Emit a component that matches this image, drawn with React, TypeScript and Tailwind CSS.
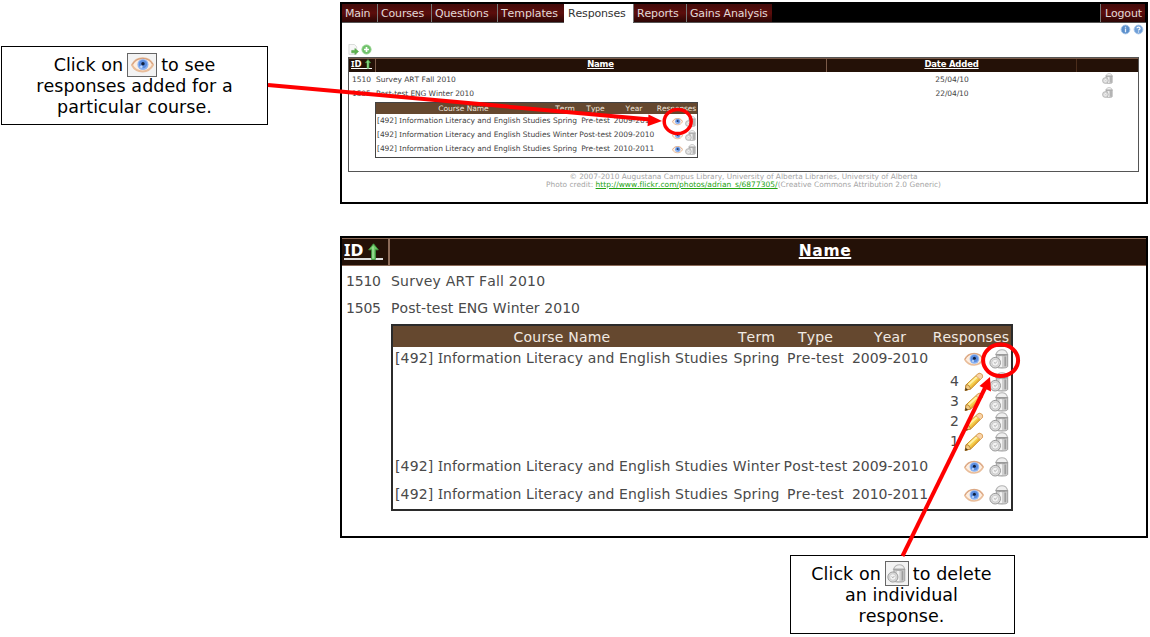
import React from "react";

type IconProps = { className?: string };

function EyeIcon({ className = "" }: IconProps) {
  return (
    <svg viewBox="0 0 20 20" className={`shrink-0 ${className}`}>
      <path d="M0.8 10.4C3 6 6.400 4.500 10.200 4.500s7.200 1.800 9 5.700c-2.200 4.100-5.200 5.800-9 5.800S2.900 14.400.8 10.400z" fill="#fdeee0" stroke="#e9bd9a" strokeWidth="1.700" />
      <path d="M1.200 10C3.500 6 6.500 4.700 10.200 4.700S16.800 6.200 18.800 9.600" fill="none" stroke="#cf9877" strokeWidth="0.800" />
      <circle cx="10.400" cy="10" r="4.800" fill="#8db4f2" />
      <circle cx="10.400" cy="9.700" r="3.600" fill="#5b8de0" />
      <circle cx="10.400" cy="9.300" r="1.500" fill="#10203f" />
      <circle cx="9" cy="12" r="1.100" fill="#c5dbfb" />
    </svg>
  );
}

function TrashIcon({ className = "" }: IconProps) {
  return (
    <svg viewBox="0 0 20 20" className={`shrink-0 ${className}`}>
      <path d="M6.800 5.500C8 2.500 10.300.8 13 .8s4.900 1.500 5.600 4.700z" fill="#efefef" stroke="#b4b4b4" strokeWidth="1.100" />
      <path d="M7.300 5.500h11.400v11.600c0 1.300-1.600 1.900-5.700 1.900s-5.700-.600-5.700-1.900z" fill="#cfcfcf" stroke="#959595" strokeWidth="0.900" />
      <path d="M11.800 7v11" stroke="#f2f2f2" strokeWidth="2.400" />
      <path d="M16.300 7.500v9.800" stroke="#9c9c9c" strokeWidth="1.800" />
      <path d="M6.900 5.700c2.600 1.300 9.300 1.300 12 0" fill="none" stroke="#a0a0a0" strokeWidth="1" />
      <circle cx="6.200" cy="13.700" r="5.300" fill="#dcdcdc" stroke="#9a9a9a" strokeWidth="1" />
      <circle cx="6.200" cy="13.700" r="3.400" fill="#f3f3f3" stroke="#bdbdbd" strokeWidth="0.700" />
      <path d="M4.800 13.200l1.500 1.300 1.500-2" fill="none" stroke="#a8a8a8" strokeWidth="0.900" />
    </svg>
  );
}

function PencilIcon({ className = "" }: IconProps) {
  return (
    <svg viewBox="0 0 20 20" className={`shrink-0 ${className}`}>
      <path d="M1.200 18.500l.900-5.700L13.500 2.300c1.200-1.200 2.700-1.300 4-.200s1.400 2.600.300 3.900L7 16.800z" fill="#f6cf4b" stroke="#c98d28" strokeWidth="1" />
      <path d="M4.300 13L14.300 3.700" stroke="#fff0a3" strokeWidth="2.200" />
      <path d="M7 15.800L16.500 6.300" stroke="#e3aa38" strokeWidth="1.300" />
      <path d="M13.300 2.600c1.400-1.500 3-1.500 4.300-.400s1.400 2.700.200 4l-1.400 1.300-4.500-3.600z" fill="#f7d3a8" stroke="#dd9f62" strokeWidth="0.800" />
      <path d="M1.200 18.500l.900-5.700 2.200.200 2.700 3.800z" fill="#f0c982" stroke="#a86f20" strokeWidth="0.700" />
      <path d="M1.200 18.700l.4-2.900 2.400 2z" fill="#4a371b" />
    </svg>
  );
}

function SortArrow({ className = "" }: IconProps) {
  return (
    <svg viewBox="0 0 12 18" className={`shrink-0 ${className}`}>
      <path d="M6 .8l4.800 6H7.900v9.700H4.100V6.800H1.200z" fill="#6cc766" stroke="#3f9a42" strokeWidth="0.900" />
      <path d="M5.500 3.500v12" stroke="#b8eab0" strokeWidth="1" />
    </svg>
  );
}

function ExportIcon() {
  return (
    <svg viewBox="0 0 12 12" className="h-[11px] w-[11px]">
      <path d="M1 .5h6l2.500 2.600v8.200H1z" fill="#f7f7f7" stroke="#cdd1cd" strokeWidth="0.800" />
      <path d="M4 7h3.500V4.800L11.500 8.200 7.500 11.500V9.600H4z" fill="#5db34d" stroke="#4f9d44" strokeWidth="0.600" />
    </svg>
  );
}

function AddIcon() {
  return (
    <svg viewBox="0 0 12 12" className="h-[11px] w-[11px]">
      <circle cx="6" cy="6" r="5" fill="#6fc26a" stroke="#8fd08a" strokeWidth="1" />
      <path d="M6 3.300v5.400M3.300 6h5.400" stroke="#fff" strokeWidth="1.800" />
    </svg>
  );
}

function RoundIcon({ help = false }: { help?: boolean }) {
  return (
    <svg viewBox="0 0 12 12" className="h-[11px] w-[11px]">
      <circle cx="6" cy="6" r="4.800" fill={help ? "#6f9fd8" : "#5b8fcb"} stroke="#a4c4e8" strokeWidth="1" />
      {help ? (
        <path d="M4.300 4.700C4.400 3 7.700 3 7.700 4.800 7.700 6 6 6 6 7.200M6 8.300v1" fill="none" stroke="#fff" strokeWidth="1.300" />
      ) : (
        <path d="M6 3v1.200M6 5v4" stroke="#e6effa" strokeWidth="1.400" />
      )}
    </svg>
  );
}

/** Capital I with serifs. */
function SerifI() {
  return <span className="font-['Noto_Sans'] text-[1.050em] leading-none">I</span>;
}

const tabs = [
  { label: "Main", box: "w-[35px] pl-[3px] tracking-[-0.3px]" },
  { label: "Courses", box: "w-[54px] border-l border-[#777] pl-[3px]" },
  { label: "Questions", box: "w-[66px] border-l border-[#777] pl-[3px]" },
  { label: "Templates", box: "w-[67px] border-l border-[#777] pl-[3px] tracking-[-0.1px]" },
  { label: "Responses", box: "w-[69px] pl-[4px]", active: true },
  { label: "Reports", box: "w-[53px] border-l border-[#777] pl-[3px]" },
  { label: "Gains Analysis", box: "w-[86px] border-l border-[#777] pl-[3px]" },
];

const tabFill = "bg-linear-to-b from-[#430b0a] via-[#5c0d0c] to-[#2c0605] text-[#e0dad8]";

const courses = [
  { term: "Spring", type: "Pre-test", year: "2009-2010" },
  { term: "Winter", type: "Post-test", year: "2009-2010" },
  { term: "Spring", type: "Pre-test", year: "2010-2011" },
];

function CourseName() {
  return (
    <>
      [492] <SerifI />nformation Literacy and English Studies
    </>
  );
}

function OverviewPanel() {
  return (
    <section className="h-[202px] w-[808px] border-2 border-black bg-white text-[7.5px] tracking-[-0.03px] text-[#444]">
      <nav className="flex h-[19px] border-b border-[#555] bg-black text-[11px] leading-[19px] tracking-[-0.16px]">
        {tabs.map((t) => (
          <div key={t.label} className={`${t.box} ${t.active ? "h-[19px] bg-white text-[#333]" : tabFill}`}>
            {t.label}
          </div>
        ))}
        <div className={`mr-px ml-auto w-[45px] border-l border-[#777] pl-[4px] ${tabFill}`}>Logout</div>
      </nav>
      <div className="flex h-[13px] items-center justify-end gap-[2px] pr-[2px]">
        <RoundIcon />
        <RoundIcon help />
      </div>
      <div className="flex h-[21px] items-end gap-[2px] pb-[2px] pl-[6px]">
        <ExportIcon />
        <AddIcon />
      </div>
      <div className="ml-[6px] h-[115px] w-[791px] border border-[#555]">
        <div className="flex h-[14px] border-t border-[#7a5a48] bg-[#241107] text-[8.500px] leading-[11px] font-bold tracking-[-0.2px] text-white">
          <div className="flex w-[27px] border-r border-[#7a5a48] pl-[2px]">
            <span className="flex h-[10px] border-b border-white tracking-normal">
              <span><SerifI />D</span>
              <SortArrow className="ml-[2px] h-[10px] w-[8px]" />
            </span>
          </div>
          <div className="w-[451px] border-r border-[#7a5a48] pr-px text-center underline underline-offset-1">Name</div>
          <div className="w-[250px] border-r border-[#4b2d1b] text-center underline underline-offset-1">Date Added</div>
        </div>
        {[
          { id: "1510", name: "Survey ART Fall 2010", date: "25/04/10", text: "" },
          { id: "1505", name: "Post-test ENG Winter 2010", date: "22/04/10", text: "tracking-[-0.1px]" },
        ].map((r) => (
          <div key={r.id} className={`mb-px flex h-[13px] items-center ${r.text}`}>
            <div className="w-[27px] pt-[2px] pl-[3px]">{r.id}</div>
            <div className="w-[451px] pt-[2px]">{r.name}</div>
            <div className="w-[250px] pt-[2px] text-center">{r.date}</div>
            <div className="flex flex-1 justify-center">
              <TrashIcon className="h-[11px] w-[11px]" />
            </div>
          </div>
        ))}
        <div className="mt-[3px] ml-[26px] w-[323px] border border-[#444] pb-px">
          <div className="flex h-[11px] items-center bg-[#65482f] pt-px text-center text-[#eee5dc]">
            <div className="w-[175px]">Course Name</div>
            <div className="w-[28px]">Term</div>
            <div className="w-[33px]">Type</div>
            <div className="w-[44px]">Year</div>
            <div className="w-[41px] tracking-[-0.1px]">Responses</div>
          </div>
          {courses.map((c, i) => (
            <div key={i} className="flex h-[14px] items-center text-center whitespace-nowrap">
              <div className="w-[175px] pb-px pl-px text-left tracking-[-0.04px]"><CourseName /></div>
              <div className="w-[28px] pb-px">{c.term}</div>
              <div className="w-[33px] pb-px tracking-[-0.08px]">{c.type}</div>
              <div className="w-[44px] pb-px">{c.year}</div>
              <div className="flex w-[41px] justify-end gap-[2px] pr-px">
                <EyeIcon className="h-[11px] w-[11px]" />
                <TrashIcon className="h-[11px] w-[11px]" />
              </div>
            </div>
          ))}
        </div>
      </div>
      <footer className="ml-[6px] w-[791px] pt-px text-center text-[7.400px] leading-[8px] tracking-normal text-[#a5a5a5]">
        <p>© 2007-2010 Augustana Campus Library, University of Alberta Libraries, University of Alberta</p>
        <p>
          Photo credit: <a className="text-[7.500px] tracking-[0.02px] text-[#23a312] underline">http://www.flickr.com/photos/adrian_s/6877305/</a>(Creative Commons Attribution 2.0 Generic)
        </p>
      </footer>
    </section>
  );
}

function DetailRow({ index, height }: { index: number; height: string }) {
  const c = courses[index];
  return (
    <div className={`flex items-center text-center whitespace-nowrap ${height}`}>
      <div className="w-[338px] pb-[2px] pl-[2px] text-left tracking-[0.13px]"><CourseName /></div>
      <div className="w-[51px] pb-[2px]">{c.term}</div>
      <div className="w-[67px] pb-[2px] tracking-[0.26px]">{c.type}</div>
      <div className="w-[82px] pb-[2px] tracking-[-0.02px]">{c.year}</div>
      <div className="flex w-[80px] justify-end gap-[5px] pr-[2px]">
        <EyeIcon className="h-[20px] w-[20px]" />
        <TrashIcon className="h-[20px] w-[20px]" />
      </div>
    </div>
  );
}

function DetailPanel() {
  return (
    <section className="mt-[32px] h-[302px] w-[808px] overflow-hidden border-2 border-black bg-white text-[14px] tracking-[0.16px] text-[#4a4a4a]">
      <div className="flex h-[28px] border-y border-[#8b6a58] bg-[#241107] text-[15.500px] leading-[25px] font-bold text-white">
        <div className="w-[48px] shrink-0 border-r-2 border-[#8b6a58] pl-[2px]">
          <span className="flex h-[21px] w-[39px] border-b-2 border-[#ddd]">
            <span><SerifI />D</span>
            <SortArrow className="mt-[4px] ml-[3px] h-[18px] w-[13px]" />
          </span>
        </div>
        <div className="w-[870px] shrink-0 text-center tracking-[0.6px] underline decoration-2 underline-offset-1">Name</div>
      </div>
      <div className="mt-[2px] flex h-[27px] items-center">
        <div className="w-[49px] pl-[4px] tracking-[-0.2px]">1510</div>
        <div className="tracking-[0.22px]">Survey ART Fall 2010</div>
      </div>
      <div className="flex h-[27px] items-center">
        <div className="w-[49px] pl-[4px] tracking-[-0.2px]">1505</div>
        <div className="tracking-[0.07px]">Post-test ENG Winter 2010</div>
      </div>
      <div className="mt-[2px] ml-[49px] w-[622px] border-2 border-[#2b2b2b]">
        <div className="flex h-[21px] items-center bg-[#65482f] pt-px text-center text-[#f1eae3]">
          <div className="w-[338px] tracking-[0.2px]">Course Name</div>
          <div className="w-[51px]">Term</div>
          <div className="w-[67px]">Type</div>
          <div className="w-[82px]">Year</div>
          <div className="w-[80px]">Responses</div>
        </div>
        <DetailRow index={0} height="h-[24px]" />
        <div className="py-px">
          {[4, 3, 2, 1].map((n) => (
            <div key={n} className="flex h-[20px] items-center justify-end gap-[5px] pr-[2px]">
              <span className="pb-[2px]">{n}</span>
              <PencilIcon className="h-[20px] w-[20px]" />
              <TrashIcon className="h-[20px] w-[20px]" />
            </div>
          ))}
        </div>
        <DetailRow index={1} height="h-[28px]" />
        <DetailRow index={2} height="h-[28px]" />
      </div>
    </section>
  );
}

function Annotations() {
  return (
    <svg viewBox="0 0 1150 637" className="pointer-events-none absolute top-0 left-0 h-[637px] w-[1150px]">
      <g fill="none" stroke="#f00" strokeWidth="4">
        <path d="M268 85L650 119.500" />
        <ellipse cx="677.700" cy="121.500" rx="13.500" ry="12" strokeWidth="3.500" />
        <path d="M902.500 556L985 388" />
        <ellipse cx="1000.600" cy="360.300" rx="17.500" ry="15.700" />
      </g>
      <path d="M662 121L647.500 126.200L648.500 114.400z" fill="#f00" />
      <path d="M990 377L991 391.500L979.500 386z" fill="#f00" />
    </svg>
  );
}

export default function App() {
  return (
    <main className="relative flex h-[637px] w-[1150px] overflow-hidden bg-white font-['DejaVu_Sans',sans-serif] whitespace-nowrap [font-kerning:none]">
      <aside className="w-[340px] shrink-0 pt-[46px] pl-px">
        <div className="h-[79px] w-[267px] border border-black pt-[8px] text-center text-[17.500px] leading-[21px] tracking-[0.06px] text-black">
          <div className="flex h-[21px] items-center justify-center gap-[4px]">
            <span>Click on</span>
            <span className="mb-[2px] flex h-[24px] w-[30px] items-center justify-center border border-[#666] bg-[#f3f3f3]">
              <EyeIcon className="h-[23px] w-[23px]" />
            </span>
            <span>to see</span>
          </div>
          <div>responses added for a</div>
          <div>particular course.</div>
        </div>
      </aside>
      <div className="w-[810px] pt-[2px]">
        <OverviewPanel />
        <DetailPanel />
        <div className="mt-[17px] ml-[450px] h-[79px] w-[225px] border border-black bg-white pt-[8px] pr-[2px] text-center text-[17.500px] leading-[21px] tracking-[0.06px] text-black">
          <div className="flex h-[21px] items-center justify-center gap-[4px]">
            <span>Click on</span>
            <span className="mb-[2px] flex h-[25px] w-[24px] items-center justify-center border border-[#666] bg-[#f3f3f3]">
              <TrashIcon className="h-[19px] w-[19px]" />
            </span>
            <span>to delete</span>
          </div>
          <div>an individual</div>
          <div>response.</div>
        </div>
      </div>
      <Annotations />
    </main>
  );
}
